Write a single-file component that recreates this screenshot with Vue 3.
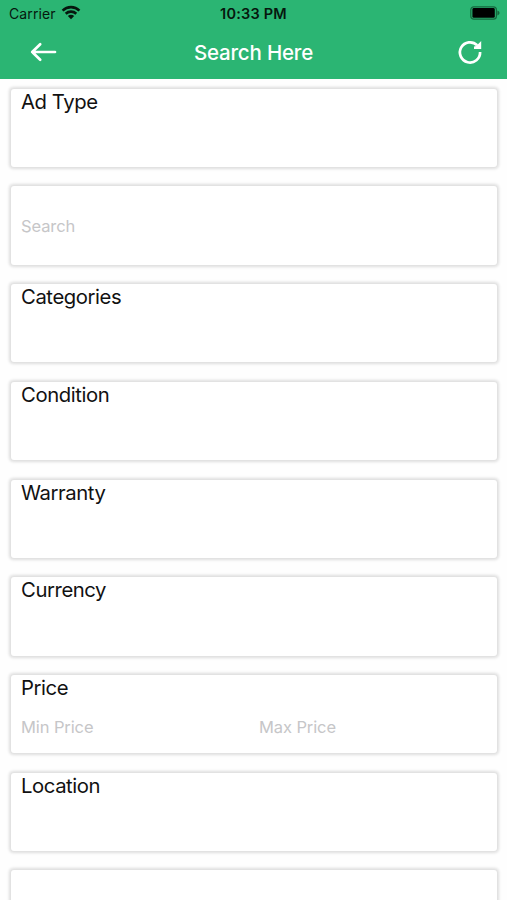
<script setup>
const fields = [
  { label: 'Ad Type' },
  { inputs: ['Search'] },
  { label: 'Categories' },
  { label: 'Condition' },
  { label: 'Warranty' },
  { label: 'Currency' },
  { label: 'Price', inputs: ['Min Price', 'Max Price'] },
  { label: 'Location' },
  {},
]
</script>

<template>
  <main class="screen">
    <header class="top">
      <div class="status">
        <div class="carrier">
          <span>Carrier</span>
          <svg class="wifi" width="20" height="15" viewBox="0 0 20 15">
            <path d="M1.6 5.6C6.3 1 13.7 1 18.4 5.6M4.7 8.7c3-2.8 7.6-2.8 10.6 0" fill="none" stroke="#06170e" stroke-width="2.6" />
            <path d="M6.8 10.9c1.8-1.7 4.6-1.7 6.4 0L10 14.3z" fill="#06170e" />
          </svg>
        </div>
        <span class="time">10:33 PM</span>
        <svg class="battery" width="31" height="14" viewBox="0 0 31 14">
          <rect x="0.8" y="0.8" width="25.6" height="12.4" rx="3" fill="none" stroke="#15683e" stroke-width="1.2" />
          <rect x="2.4" y="2" width="22.4" height="9.8" rx="1.4" fill="#000" />
          <path d="M27.4 4.6c2.8.7 2.8 4.1 0 4.8z" fill="#15683e" />
        </svg>
      </div>
      <nav class="nav">
        <svg class="back" width="28" height="22" viewBox="0 0 28 22">
          <path d="M26 11H3.2M11.2 3.2L3.2 11l8 7.8" fill="none" stroke="#fff" stroke-width="2.7" stroke-linecap="round" stroke-linejoin="round" />
        </svg>
        <h1>Search Here</h1>
        <svg class="reload" width="26" height="26" viewBox="0 0 26 26">
          <path d="M20.2 6.3A10.1 10.1 0 1 0 23.1 13" fill="none" stroke="#fff" stroke-width="2.7" />
          <path d="M24.2 2v8h-7.2v-2.4l2.2-.6z" fill="#fff" />
        </svg>
      </nav>
    </header>
    <section class="list">
      <div v-for="(field, i) in fields" :key="i" class="card" :class="{ plain: !field.label }">
        <h2 v-if="field.label">{{ field.label }}</h2>
        <div v-if="field.inputs" class="inputs">
          <span v-for="text in field.inputs" :key="text">{{ text }}</span>
        </div>
      </div>
    </section>
  </main>
</template>

<style>
body {
  background: #fff;
}
</style>

<style scoped>
.screen {
  height: 900px;
  overflow: hidden;
  background: #fefefe;
  font-family: Inter, "Liberation Sans", sans-serif;
}
.top {
  height: 79px;
  background: #2bb573;
}
.status {
  display: grid;
  grid-template-columns: 1fr auto 1fr;
  align-items: center;
  height: 27px;
  padding: 0 6px 0 6px;
  color: #06170e;
  font-size: 14px;
  line-height: 27px;
}
.carrier {
  display: flex;
  align-items: center;
  gap: 5px;
  padding-left: 3px;
  letter-spacing: 0.1px;
}
.wifi {
  margin-top: -2px;
}
.time {
  font-size: 14.5px;
  font-weight: 600;
  letter-spacing: 0.2px;
}
.battery {
  justify-self: end;
  margin-top: -1px;
}
.nav {
  display: grid;
  grid-template-columns: 1fr auto 1fr;
  align-items: center;
  height: 50px;
  padding: 0 24px;
}
.back {
  margin-left: 5px;
}
h1 {
  margin: 2px 0 0;
  color: #fff;
  font-size: 20.5px;
  font-weight: 500;
  letter-spacing: -0.2px;
  line-height: 24px;
}
.reload {
  justify-self: end;
}
.list {
  display: flex;
  flex-direction: column;
  gap: 19.35px;
  padding: 9.6px 10px 0 11px;
}
.card {
  flex: none;
  display: flex;
  flex-direction: column;
  box-sizing: border-box;
  height: 78.4px;
  padding: 0 10px;
  border-radius: 3px;
  background: #fff;
  box-shadow: 0 0 3px 1.5px #dedede;
}
.plain {
  justify-content: center;
}
h2 {
  margin: 0 0 15px;
  color: #111;
  font-size: 20.3px;
  font-weight: 400;
  letter-spacing: -0.42px;
  line-height: 26px;
}
.inputs {
  display: grid;
  grid-template-columns: 1fr 1fr;
  column-gap: 10px;
  color: #c6c6c8;
  font-size: 16.5px;
  letter-spacing: -0.1px;
  line-height: 22px;
}
</style>
